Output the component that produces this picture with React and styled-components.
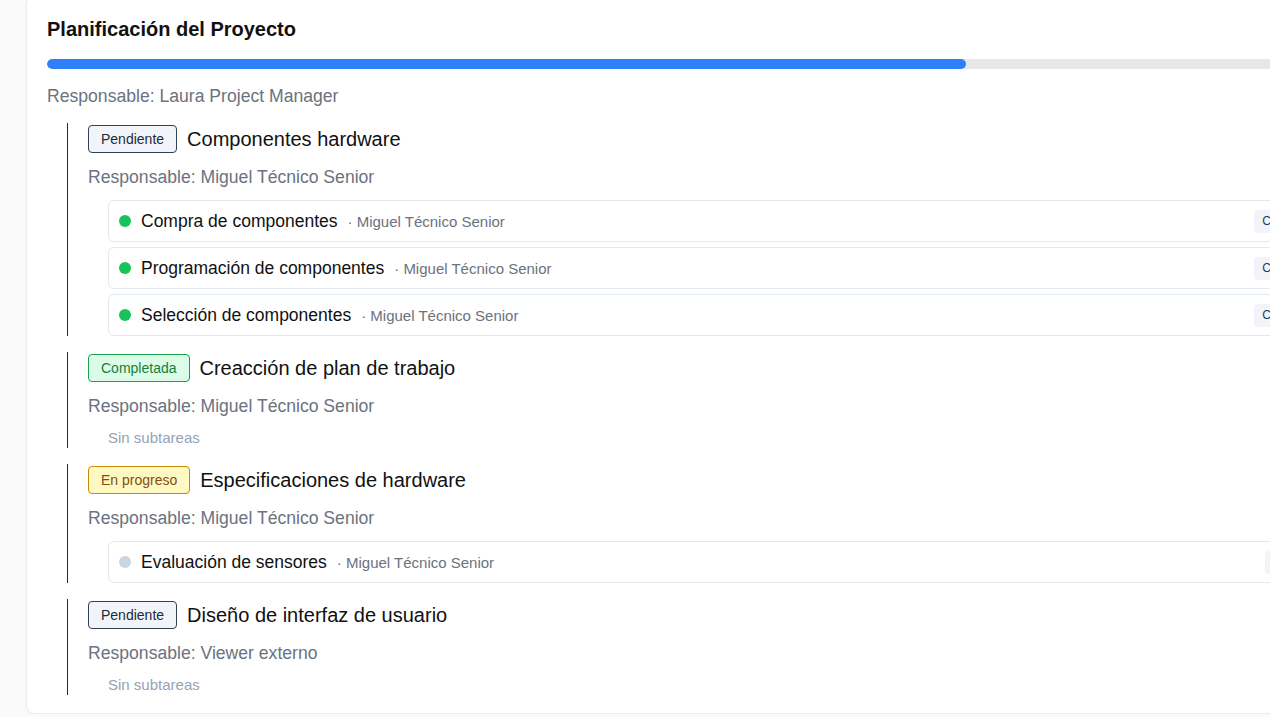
import React from "react";
import styled, { createGlobalStyle } from "styled-components";

const GlobalStyle = createGlobalStyle`
  html, body {
    margin: 0;
    padding: 0;
    overflow: hidden;
    background: #fafafa;
    font-family: "Liberation Sans", Arial, sans-serif;
  }
`;

const Page = styled.div`
  padding-left: 26px;
`;

const Card = styled.section`
  width: 1300px;
  margin-top: -4px;
  padding: 21px 20px 18px;
  background: #ffffff;
  border: 1px solid #ececec;
  border-radius: 8px;
  box-shadow: 0 1px 3px rgba(0, 0, 0, 0.04);
`;

const Title = styled.h2`
  margin: 0;
  font-size: 20px;
  line-height: 22px;
  font-weight: 700;
  color: #111111;
`;

const Track = styled.div`
  margin-top: 19px;
  height: 10px;
  background: #e5e7eb;
  border-radius: 5px;
  overflow: hidden;
`;

const Fill = styled.div`
  height: 100%;
  background: #2f7ff8;
  border-radius: 5px;
`;

const Owner = styled.div`
  margin-top: ${(p) => p.$top || 10}px;
  font-size: 17.6px;
  line-height: 24px;
  color: #6b7280;
`;

const Groups = styled.div`
  margin-top: 15px;
  margin-left: 20px;
  display: flex;
  flex-direction: column;
  gap: 16px;
`;

const Group = styled.div`
  border-left: 1px solid #1f2937;
  padding-left: 20px;
`;

const Header = styled.div`
  height: 32px;
  display: flex;
  align-items: center;
  gap: 10px;
`;

const badgeColors = {
  pending: { bg: "#f1f5f9", border: "#334155", color: "#1e293b" },
  done: { bg: "#dcfce7", border: "#16a34a", color: "#15803d" },
  progress: { bg: "#fef9c3", border: "#ca8a04", color: "#854d0e" },
};

const Badge = styled.span`
  box-sizing: border-box;
  height: 28px;
  display: inline-flex;
  align-items: center;
  padding: 0 12px;
  font-size: 14px;
  border-radius: 4px;
  border: 1px solid ${(p) => badgeColors[p.$status].border};
  background: ${(p) => badgeColors[p.$status].bg};
  color: ${(p) => badgeColors[p.$status].color};
`;

const TaskName = styled.span`
  font-size: 20px;
  line-height: 24px;
  color: #111111;
`;

const SubList = styled.div`
  margin-top: 11px;
  margin-left: 20px;
  display: flex;
  flex-direction: column;
  gap: 5px;
`;

const SubRow = styled.div`
  display: flex;
  align-items: center;
  padding: 8px 11px 8px 10px;
  height: 24px;
  border: 1px solid #e2e8f0;
  border-radius: 6px;
  background: #ffffff;
`;

const Dot = styled.span`
  width: 12px;
  height: 12px;
  border-radius: 50%;
  background: ${(p) => (p.$done ? "#16c45a" : "#cbd5e1")};
  margin-right: 10px;
  flex-shrink: 0;
`;

const SubName = styled.span`
  font-size: 17.5px;
  color: #111111;
`;

const SubOwner = styled.span`
  margin-left: 10px;
  font-size: 15px;
  color: #6b7280;
`;

const SubBadge = styled.span`
  margin-left: auto;
  padding: 3px 8px;
  font-size: 12px;
  line-height: 17px;
  border-radius: 4px;
  background: #f1f5f9;
  color: #1e3a5f;
`;

const Empty = styled.div`
  margin-top: 10px;
  margin-left: 20px;
  font-size: 15px;
  line-height: 20px;
  color: #94a3b8;
`;

const statusLabel = {
  pending: "Pendiente",
  done: "Completada",
  progress: "En progreso",
};

const tasks = [
  {
    status: "pending",
    name: "Componentes hardware",
    owner: "Miguel Técnico Senior",
    subs: [
      { name: "Compra de componentes", done: true },
      { name: "Programación de componentes", done: true },
      { name: "Selección de componentes", done: true },
    ],
  },
  {
    status: "done",
    name: "Creacción de plan de trabajo",
    owner: "Miguel Técnico Senior",
    subs: [],
  },
  {
    status: "progress",
    name: "Especificaciones de hardware",
    owner: "Miguel Técnico Senior",
    subs: [{ name: "Evaluación de sensores", done: false }],
  },
  {
    status: "pending",
    name: "Diseño de interfaz de usuario",
    owner: "Viewer externo",
    subs: [],
  },
];

const App = () => {
  const progress = 70.7;

  return (
    <Page>
      <GlobalStyle />
      <Card>
        <Title>Planificación del Proyecto</Title>
        <Track>
          <Fill style={{ width: `${progress}%` }} />
        </Track>
        <Owner $top={15}>Responsable: Laura Project Manager</Owner>

        <Groups>
          {tasks.map((task) => (
            <Group key={task.name}>
              <Header>
                <Badge $status={task.status}>{statusLabel[task.status]}</Badge>
                <TaskName>{task.name}</TaskName>
              </Header>
              <Owner>Responsable: {task.owner}</Owner>
              {task.subs.length ? (
                <SubList>
                  {task.subs.map((sub) => (
                    <SubRow key={sub.name}>
                      <Dot $done={sub.done} />
                      <SubName>{sub.name}</SubName>
                      <SubOwner>· {task.owner}</SubOwner>
                      <SubBadge>{sub.done ? "Completada" : "Pendiente"}</SubBadge>
                    </SubRow>
                  ))}
                </SubList>
              ) : (
                <Empty>Sin subtareas</Empty>
              )}
            </Group>
          ))}
        </Groups>
      </Card>
    </Page>
  );
};

export default App;
